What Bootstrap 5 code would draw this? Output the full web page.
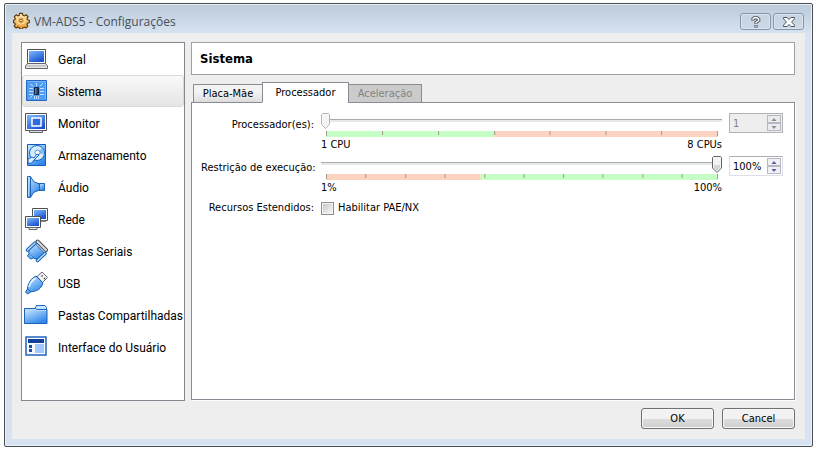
<!DOCTYPE html>
<html lang="pt-BR">
<head>
<meta charset="utf-8">
<meta name="viewport" content="width=device-width, initial-scale=1">
<title>VM-ADS5 - Configurações</title>
<link href="https://cdn.jsdelivr.net/npm/bootstrap@5.3.0/dist/css/bootstrap.min.css" rel="stylesheet">
<style>
  body { background: #fff; color: #000; font: 11px/14px "DejaVu Sans Condensed", "Noto Sans", sans-serif; padding: 3px 3px 3px 4px; }
  .dialog { border: 1px solid #4a4d52; border-radius: 2px; padding: 0 7px 7px; background: linear-gradient(#bccad9, #d7e3f0 30px); box-shadow: inset 0 0 0 1px #e9f1f9; }
  .titlebar { height: 29px; padding: 6px 0 0 1px; }
  .app-icon { margin-top: 2px; }
  .title-text { font: 12px/18px "Open Sans", sans-serif; color: #46505c; margin: 3px 0 0; }
  .frame-btn { width: 31px; height: 17px; margin-top: 3px; padding: 0; border: 1px solid #8594ab; border-radius: 3px; background: linear-gradient(#c6d3e1, #ccd9e7); box-shadow: inset 0 0 0 1px #dbe6f1; display: flex; align-items: center; justify-content: center; }
  .frame-btns { gap: 2px; margin-right: 1px; }
  .client { background: #eee; padding: 9px 10px 10px 9px; }
  .columns { gap: 6px; }
  .side { width: 164px; background: #fff; border: 1px solid #828790; border-radius: 0; font: 12px/18px Roboto, sans-serif; }
  .side-item { height: 32px; padding: 0 1px; gap: 10px; border: 1px solid transparent; border-radius: 3px; background: none; color: #000; text-align: left; white-space: nowrap; }
  .side-item.selected { border-color: #dadada; background: linear-gradient(#f9f9f9, #e5e5e5); }
  .side-item svg { width: 24px; height: 24px; flex: none; }
  .side-item span { padding-top: 2px; }
  .heading { height: 33px; border: 1px solid #a0a0a0; background: #fff; padding: 0 8px; margin-bottom: 7px; }
  .heading h1 { font: bold 13px/18px "DejaVu Sans Condensed", "Noto Sans", sans-serif; margin: 0; }
  .content-area { padding-bottom: 1px; }
  .page-tabs { padding-left: 2px; position: relative; z-index: 1; border: 0; flex-wrap: nowrap; margin-bottom: -1px; }
  .page-tabs .nav-link { height: 19px; padding: 1px 0 0; border: 1px solid #898c95; border-radius: 0; margin: 0; color: #000; background: linear-gradient(#f3f3f3 45%, #dcdcdc); width: 70px; text-align: center; white-space: nowrap; }
  .page-tabs .nav-link.active { width: 87px; height: 21px; padding: 0; background: #fff; border-color: #898c95; border-bottom-color: #fff; margin: 0 -1px; color: #000; }
  .page-tabs .nav-link:disabled { width: 74px; background: #cbcbcb; border-color: #898c95; color: #838383; }
  .page { background: #fff; border: 1px solid #898c95; box-shadow: 1px 1px 0 #fff; padding: 10px 11px 10px 9px; }
  .settings { display: grid; grid-template-columns: 113px 1fr 54px; column-gap: 7px; }
  .settings .name { text-align: right; padding-top: 5px; white-space: nowrap; }
  .settings .setting-control { height: 43px; }
  .settings .extra { padding-top: 2px; }
  .slide { -webkit-appearance: none; appearance: none; display: block; width: 100%; height: 18px; margin: 0; background: linear-gradient(#a8abac 0 1px, #e7eaea 1px 3px) 0 6px / 100% 3px no-repeat; border: 0; opacity: 1; }
  .slide::-webkit-slider-thumb { -webkit-appearance: none; width: 11px; height: 18px; border: 0; background: url("data:image/svg+xml,%3Csvg xmlns='http://www.w3.org/2000/svg' width='11' height='18'%3E%3Cpath d='M2.500 .5h7l1 1v10.500l-4.500 4.500-4.500-4.500V1.500z' fill='%23f4f4f4' stroke='%23666'/%3E%3Cpath d='M3 9h6v3l-3 3-3-3z' fill='%23d6d6d6'/%3E%3C/svg%3E") no-repeat; }
  .slide:disabled::-webkit-slider-thumb { background-image: url("data:image/svg+xml,%3Csvg xmlns='http://www.w3.org/2000/svg' width='11' height='18'%3E%3Cpath d='M1.500 .5h6l1 1v10l-4 4-4-4v-10z' fill='%23f5f5f5' stroke='%23b5b8b8'/%3E%3C/svg%3E"); }
  .scale-bar { display: block; width: calc(100% - 9px); height: 6px; margin: 0 4px 0 5px; }
  .ends { padding-top: 1px; }
  .spin { height: 20px; border: 1px solid #dcdfe8; border-top-color: #abadb3; background: #fff; padding: 1px; }
  .spin.off { background: #eee; border-color: #b0b3b6; }
  .spin input { min-width: 0; width: 36px; border: 0; background: transparent; padding: 2px 0 0 2px; line-height: 14px; color: #000; }
  .spin input:disabled { color: #838383; }
  .spin button { width: 14px; height: 8px; padding: 0; border: 1px solid #b6b9c4; background: #f1f1f4; display: flex; align-items: center; justify-content: center; color: #4b5fae; }
  .spin button:disabled { color: #8d8d8d; background: #ececec; }
  .tick { appearance: none; width: 13px; height: 13px; margin: 0; border: 1px solid #8e8f8f; background: linear-gradient(135deg, #c4c8cf, #f5f5f5) content-box; padding: 1px; box-shadow: inset 0 0 0 1px #f4f4f4; }
  .tick:checked { background: #3c6ea8 content-box; }
  .actions { padding-top: 7px; }
  .action { width: 73px; height: 21px; padding: 0; border: 1px solid #707070; border-radius: 3px; background: linear-gradient(#f2f2f2 0 50%, #dddddd 50%, #cfcfcf); box-shadow: inset 0 0 0 1px #f7f7f7; color: #000; }
</style>
<script src="https://cdn.jsdelivr.net/npm/bootstrap@5.3.0/dist/js/bootstrap.bundle.min.js"></script>
</head>
<body class="min-vh-100 d-flex flex-column">
<svg width="0" height="0" class="position-absolute" aria-hidden="true">
  <defs>
    <linearGradient id="blue" x1="0" y1="0" x2=".6" y2="1"><stop stop-color="#7dbbfb"/><stop offset="1" stop-color="#1b55d2"/></linearGradient>
    <linearGradient id="sky" x1="0" y1="0" x2=".6" y2="1"><stop stop-color="#d4edff"/><stop offset="1" stop-color="#3088ea"/></linearGradient>
    <linearGradient id="gold" x1="0" y1="0" x2="0" y2="1"><stop stop-color="#fff0bd"/><stop offset="1" stop-color="#e9992a"/></linearGradient>
  </defs>
</svg>
<main class="dialog flex-grow-1 d-flex flex-column">
  <header class="titlebar d-flex align-items-start">
    <svg width="17" height="17" viewBox="0 0 18 18" class="app-icon me-1 flex-shrink-0" aria-hidden="true">
      <path d="M7 1.500h3l.5 2 1.500.6 2-1.200 1.900 2-1.100 1.900.5 1.400 2 .6v2.400l-2 .6-.6 1.400 1.100 1.900-2 1.900-1.900-1.100-1.400.6-.5 1.500H7l-.5-1.600-1.400-.6-1.900 1.100-2-1.900 1.200-1.900-.6-1.400-1.300-.5V8.800l1.400-.6.6-1.400-1.100-1.900 2-2 1.900 1.200 1.300-.6z" fill="url(#gold)" stroke="#5f390a" stroke-width="1.200"/>
      <circle cx="8.500" cy="9" r="4" fill="#f3b64f" stroke="#fff3cf" stroke-width=".8"/><circle cx="8.500" cy="9" r="1.500" fill="#fff4d2" stroke="#7a4a12"/>
    </svg>
    <p class="title-text flex-grow-1">VM-ADS5 - Configurações</p>
    <div class="frame-btns d-flex">
      <button type="button" class="frame-btn" aria-label="Ajuda"><svg width="10" height="12" viewBox="0 0 10 12" fill="none"><path d="M2 4.500V3l1.200-1.200h3L7.700 3v1.500L5 6.500V8M5 9v2.500" stroke="#4c5260" stroke-width="3.200"/><path d="M2 3.800V3l1.200-1.200h3L7.700 3v1.500L5 6.500v1M5 9.500v1.200" stroke="#fff" stroke-width="1.400"/></svg></button>
      <button type="button" class="frame-btn" aria-label="Fechar"><svg width="12" height="10" viewBox="0 0 12 10"><path d="M.5.5h3.600L6 2.600 7.900.5h3.600v1.300L8.600 5l2.900 3.200v1.300H7.900L6 7.400 4.100 9.500H.5V8.200L3.400 5 .5 1.800z" fill="#fff" stroke="#4c5260"/></svg></button>
    </div>
  </header>

  <div class="client flex-grow-1 d-flex flex-column">
    <div class="columns d-flex flex-grow-1">
      <nav class="side list-group flex-shrink-0" aria-label="Categorias">
        <button type="button" class="side-item d-flex align-items-center">
          <svg viewBox="0 0 24 24"><path d="M3.500 2.500h18v14h-18z" fill="#fff" stroke="#4d5059"/><path d="M5 4h15v11H5z" fill="url(#blue)"/><path d="M3.500 16.500h18l2 2.500v2.500h-22v-2.500z" fill="#e8e8e8" stroke="#62656d"/><path d="M3 19h19" stroke="#aaa"/></svg><span>Geral</span></button>
        <button type="button" class="side-item selected d-flex align-items-center" aria-current="page">
          <svg viewBox="0 0 24 24"><path d="M2.500 1.500h20v20h-20z" fill="#4e9cf3" stroke="#2568c4"/><path d="M3.500 2.500h18v18" fill="none" stroke="#77b7fa"/><g stroke="#bde1ff" fill="none"><path d="M5 9.500h4M5 12.500h4M5 15.500h4M16 9.500h4M16 12.500h4M16 15.500h4M10.500 17v3M12.500 17v3M14.500 17v3M5.500 19.500l3-3M16 7l3-3M6 5l3 2M12.500 4v3"/></g><path d="M10.500 8.500h4v7h-4z" fill="#28364a" stroke="#142748"/><path d="M11 9h1.500v6H11z" fill="#607894"/></svg><span>Sistema</span></button>
        <button type="button" class="side-item d-flex align-items-center">
          <svg viewBox="0 0 24 24"><path d="M1.500 2.500h21v17h-21z" fill="#fff" stroke="#4d5059"/><path d="M3 4h18v14H3z" fill="url(#blue)"/><path d="M8 7h9v8H8z" fill="#2c6ade" stroke="#fff" stroke-width="1.500"/><path d="M5.500 19.500h13v2h-13z" fill="#ddd" stroke="#62656d"/></svg><span>Monitor</span></button>
        <button type="button" class="side-item d-flex align-items-center">
          <svg viewBox="0 0 24 24"><path d="M3.500 1.500h18v21h-18z" fill="url(#sky)" stroke="#165ac0"/><circle cx="13" cy="10" r="7.500" fill="#d4edff" stroke="#1861c6"/><path d="M13 10l5-5a7 7 0 0 1 1.500 6z" fill="#7ebcf6"/><circle cx="13.500" cy="9.500" r="2.500" fill="#fff" stroke="#4c94e2"/><path d="M15 12l-4 4-4 4.500-3-.5v-4l4-2 2 1 3-4z" fill="#d9eeff" stroke="#1861c6"/></svg><span>Armazenamento</span></button>
        <button type="button" class="side-item d-flex align-items-center">
          <svg viewBox="0 0 24 24"><path d="M13.500 8.500h7v7h-7z" fill="url(#sky)" stroke="#1a63b5"/><path d="M3.500 1.500h3l3 5 6 2.500v6l-6 2.500-3 5h-3z" fill="url(#sky)" stroke="#1a63b5"/><path d="M6.500 2v20" stroke="#1a63b5"/><path d="M4.500 3v18" stroke="#a9d8ff"/></svg><span>Áudio</span></button>
        <button type="button" class="side-item d-flex align-items-center">
          <svg viewBox="0 0 24 24"><path d="M8.500 1.500h15v12h-15z" fill="#fff" stroke="#4d5059"/><path d="M10 3h12v9H10z" fill="url(#blue)"/><path d="M16 13.500h6v1.500h-6z" fill="#888"/><path d="M1.500 9.500h15v11h-15z" fill="#fff" stroke="#4d5059"/><path d="M3 11h12v8H3z" fill="url(#blue)"/><path d="M5 20.500h8v2H5z" fill="#eee" stroke="#666"/></svg><span>Rede</span></button>
        <button type="button" class="side-item d-flex align-items-center">
          <svg viewBox="0 0 24 24" stroke-linecap="round"><path d="M13.500 2.500L22 11" stroke="#4d5059" stroke-width="4"/><path d="M13.500 2.500L22 11" stroke="#ddd" stroke-width="2"/><path d="M11 4.500l10 10-3 4-7 1.500-6.500-6.500 1-4z" fill="url(#sky)" stroke="#1760b4"/><path d="M11 4L3.500 11M21 14.500l-7.500 7" stroke="#1760b4" stroke-width="3.500"/><path d="M11 4L3.500 11M21 14.500l-7.500 7" stroke="#b5deff" stroke-width="1.500"/><path d="M5.500 14l-2 3 3 3 3-1" stroke="#1760b4" fill="#69adf0"/></svg><span>Portas Seriais</span></button>
        <button type="button" class="side-item d-flex align-items-center">
          <svg viewBox="0 0 24 24"><path d="M13 5.500l5-4.500 5.500 5.500-5 5z" fill="#f4f4f4" stroke="#62656d"/><path d="M17.500 4.500l1 1M20 7l1 1" stroke="#444" stroke-width="1.500"/><path d="M12 5l7 7c-1 4-4.500 7.500-8 8l-4.500 1-3 2-2-2 2-3c0-5 4-11.500 8.500-13z" fill="url(#sky)" stroke="#1760b4"/><path d="M5 16c1-4 3.500-7 6.500-8.500" stroke="#ebf7ff" fill="none" stroke-width="1.500"/><path d="M3.500 17.500l3.500 3.500" stroke="#1760b4"/></svg><span>USB</span></button>
        <button type="button" class="side-item d-flex align-items-center">
          <svg viewBox="0 0 24 24"><path d="M10.500 6.500l2-4H21l1.500 2v5h-12z" fill="#c8e5ff" stroke="#2469bc"/><path d="M.5 5.500h11l1.500 1h10v14H.5z" fill="url(#sky)" stroke="#1d62b8"/><path d="M1.500 6.500h10l1.500 1h9" fill="none" stroke="#b6dcff"/></svg><span>Pastas Compartilhadas</span></button>
        <button type="button" class="side-item d-flex align-items-center">
          <svg viewBox="0 0 24 24"><path d="M2 2h20v18H2z" fill="#f6faff" stroke="#2463bb" stroke-width="1.500"/><path d="M4 4h16v4H4z" fill="#123f9b"/><path d="M5 10h3v3H5zM5 14h3v3H5z" fill="#174aab"/><path d="M11 9h9v9h-9z" fill="#a2c9ff"/></svg><span>Interface do Usuário</span></button>
      </nav>

      <section class="content-area flex-grow-1 d-flex flex-column">
        <div class="heading d-flex align-items-center"><h1>Sistema</h1></div>
        <div class="page-tabs nav nav-tabs align-items-end" role="tablist">
          <button type="button" class="nav-link" role="tab" aria-selected="false">Placa-Mãe</button>
          <button type="button" class="nav-link active" role="tab" aria-selected="true">Processador</button>
          <button type="button" class="nav-link" role="tab" aria-selected="false" disabled>Aceleração</button>
        </div>
        <div class="page flex-grow-1" role="tabpanel">
          <div class="settings">
            <label class="name" for="cpus">Processador(es):</label>
            <div class="setting-control">
              <input id="cpus" class="slide" type="range" min="1" max="8" value="1" disabled>
              <svg class="scale-bar"><rect width="100%" height="6" fill="#c5ffc5"/><rect x="42.900%" width="57.100%" height="6" fill="#fcd3c1"/>
                <g fill="#a19a8b"><rect width="1" height="5"/><rect x="14.300%" width="1" height="4"/><rect x="28.600%" width="1" height="4"/><rect x="42.900%" width="1" height="4"/><rect x="57%" width="1" height="4"/><rect x="71.300%" width="1" height="4"/><rect x="85.500%" width="1" height="4"/><rect x="99.750%" width="1" height="5"/></g></svg>
              <div class="ends d-flex justify-content-between"><span>1 CPU</span><span>8 CPUs</span></div>
            </div>
            <div><div class="spin off d-flex justify-content-between align-items-center"><input type="text" value="1" aria-label="Número de processadores" disabled>
              <div><button type="button" aria-label="Aumentar processadores" disabled><svg width="6" height="3"><path d="M3 0l2.500 3h-5z" fill="currentColor"/></svg></button><button type="button" aria-label="Diminuir processadores" disabled><svg width="6" height="3"><path d="M.5 0h5L3 3z" fill="currentColor"/></svg></button></div></div></div>

            <label class="name" for="cap">Restrição de execução:</label>
            <div class="setting-control">
              <input id="cap" class="slide" type="range" min="1" max="100" value="100">
              <svg class="scale-bar"><rect width="100%" height="6" fill="#c5ffc5"/><rect width="39.400%" height="6" fill="#fcd3c1"/>
                <g fill="#a19a8b"><rect width="1" height="5"/><rect x="10%" width="1" height="4"/><rect x="20.200%" width="1" height="4"/><rect x="30.200%" width="1" height="4"/><rect x="40.400%" width="1" height="4"/><rect x="50.400%" width="1" height="4"/><rect x="60.500%" width="1" height="4"/><rect x="70.500%" width="1" height="4"/><rect x="80.700%" width="1" height="4"/><rect x="90.700%" width="1" height="4"/><rect x="99.750%" width="1" height="5"/></g></svg>
              <div class="ends d-flex justify-content-between"><span>1%</span><span>100%</span></div>
            </div>
            <div><div class="spin d-flex justify-content-between align-items-center"><input type="text" value="100%" aria-label="Percentual de execução">
              <div><button type="button" aria-label="Aumentar percentual"><svg width="6" height="3"><path d="M3 0l2.500 3h-5z" fill="currentColor"/></svg></button><button type="button" aria-label="Diminuir percentual"><svg width="6" height="3"><path d="M.5 0h5L3 3z" fill="currentColor"/></svg></button></div></div></div>

            <span class="name extra">Recursos Estendidos:</span>
            <div class="extra d-flex align-items-center gap-1"><input class="tick" type="checkbox" id="pae"><label for="pae">Habilitar PAE/NX</label></div>
          </div>
        </div>
      </section>
    </div>
    <footer class="actions d-flex justify-content-end gap-2">
      <button type="button" class="action">OK</button>
      <button type="button" class="action">Cancel</button>
    </footer>
  </div>
</main>
</body>
</html>
